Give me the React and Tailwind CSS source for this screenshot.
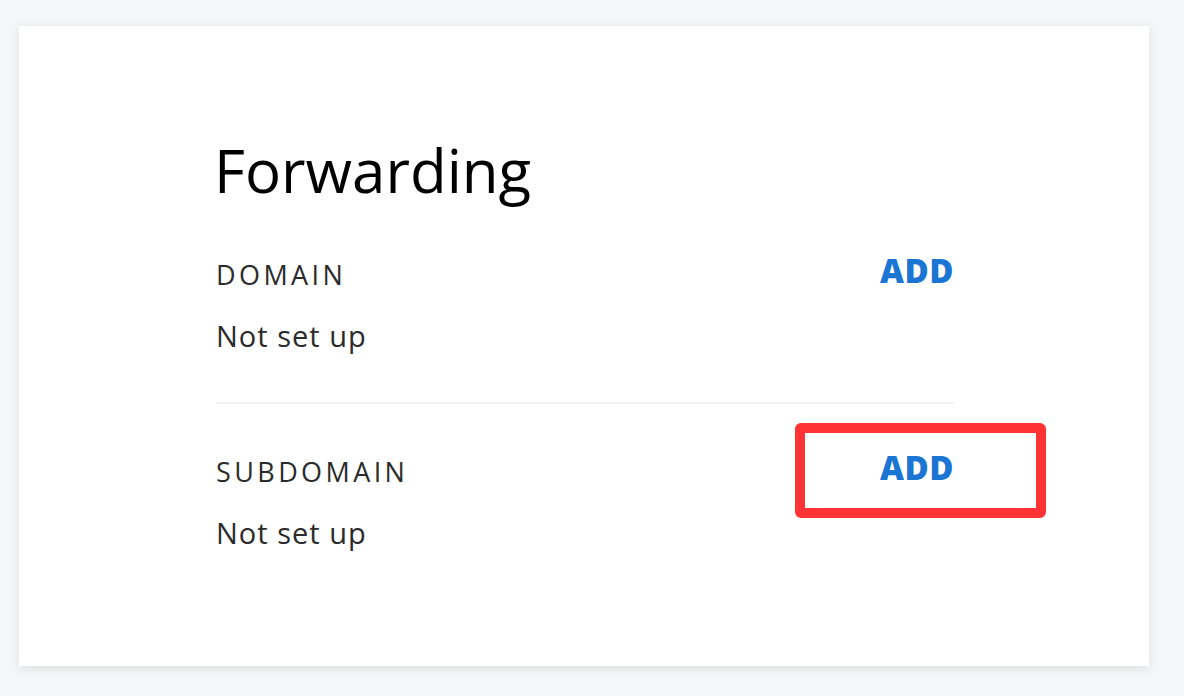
import { useState } from 'react';

const font = { fontFamily: '"Open Sans", "Liberation Sans", sans-serif' };

function ForwardRow({ label, highlight }) {
  const [value] = useState('Not set up');
  return (
    <div>
      <div className="relative flex items-start justify-between">
        <span className="mt-[7px] text-[27px] leading-none tracking-[3.4px] text-[#2b2b2b]">{label}</span>
        <button className="text-[33px] font-extrabold leading-none tracking-[0.5px] text-[#1b75d2]">ADD</button>
        {highlight && (
          <div className="pointer-events-none absolute -top-[28px] -right-[92px] h-[95px] w-[251px] rounded-[6px] border-[10px] border-[#ff3333]" />
        )}
      </div>
      <p className="mt-[33px] text-[29px] leading-none tracking-[1px] text-[#2b2b2b]">{value}</p>
    </div>
  );
}

export default function App() {
  return (
    <div className="min-h-screen bg-[#f5f6f8] pl-[19px] pt-[26px]" style={font}>
      <div className="h-[640px] w-[1130px] bg-white pl-[197px] pt-[114px] shadow-[0_3px_10px_rgba(0,0,0,0.09)]">
        <div className="w-[738px]">
          <h1 className="-ml-[2px] text-[60px] font-normal leading-none text-black">Forwarding</h1>
          <div className="mt-[54px]">
            <ForwardRow label="DOMAIN" />
          </div>
          <div className="mt-[52px] h-[2px] bg-[#f3f3f3]" />
          <div className="mt-[47px]">
            <ForwardRow label="SUBDOMAIN" highlight />
          </div>
        </div>
      </div>
    </div>
  );
}
